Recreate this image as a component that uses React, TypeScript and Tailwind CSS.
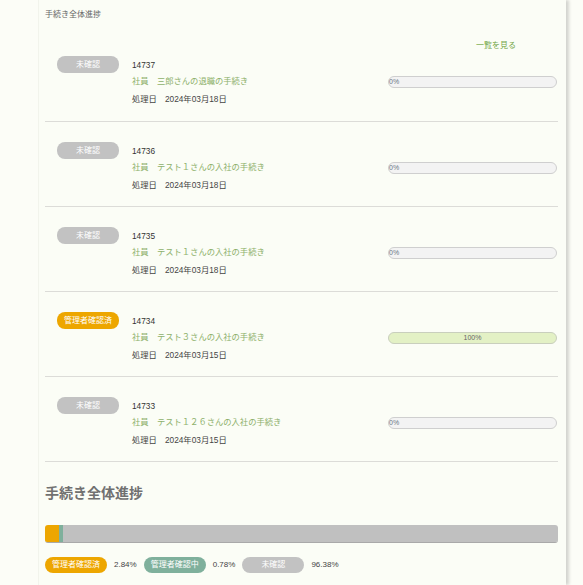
import React from "react";

type Row = {
  status: "unconfirmed" | "done";
  id: string;
  title: string;
  date: string;
  pct: number;
};

const rows: Row[] = [
  { status: "unconfirmed", id: "14737", title: "社員　三郎さんの退職の手続き", date: "2024年03月18日", pct: 0 },
  { status: "unconfirmed", id: "14736", title: "社員　テスト１さんの入社の手続き", date: "2024年03月18日", pct: 0 },
  { status: "unconfirmed", id: "14735", title: "社員　テスト１さんの入社の手続き", date: "2024年03月18日", pct: 0 },
  { status: "done", id: "14734", title: "社員　テスト３さんの入社の手続き", date: "2024年03月15日", pct: 100 },
  { status: "unconfirmed", id: "14733", title: "社員　テスト１２６さんの入社の手続き", date: "2024年03月15日", pct: 0 },
];

function Badge({ status }: { status: Row["status"] }) {
  if (status === "done") {
    return (
      <div className="w-[62px] h-[17px] rounded-[8px] bg-[#eda600] text-white text-[8px] leading-[17px] text-center shrink-0">
        管理者確認済
      </div>
    );
  }
  return (
    <div className="w-[62px] h-[17px] rounded-[8px] bg-[#c2c2c2] text-white text-[8px] leading-[17px] text-center shrink-0">
      未確認
    </div>
  );
}

function Progress({ pct }: { pct: number }) {
  if (pct >= 100) {
    return (
      <div className="w-[169px] h-[12px] rounded-full border border-[#c9cfbd] bg-[#e3f1c5] text-[7px] leading-[10px] text-center text-[#666]">
        100%
      </div>
    );
  }
  return (
    <div className="w-[169px] h-[12px] rounded-full border border-[#cfcfcf] bg-[#f3f3f3] text-[7px] leading-[10px] text-[#6b7785]">
      0%
    </div>
  );
}

function RowItem({ row, first }: { row: Row; first: boolean }) {
  return (
    <div className={`flex border-b border-[#dcdcd8] pl-[12px] ${first ? "pt-[4px] pb-[13px]" : "pt-[20px] pb-[12px]"}`}>
      <div>
        <Badge status={row.status} />
      </div>
      <div className="ml-[13px] flex-1 flex flex-col text-[8.3px]">
        <div className="h-[17px] leading-[18px] text-[#333]">{row.id}</div>
        <div className="h-[17px] flex items-center justify-between pr-[1px]">
          <span className="text-[#8db06a]">{row.title}</span>
          <Progress pct={row.pct} />
        </div>
        <div className="h-[18px] leading-[18px] text-[#444] flex">
          <span>処理日</span>
          <span className="ml-[8px]">{row.date}</span>
        </div>
      </div>
    </div>
  );
}

export default function App() {
  return (
    <div className="w-[583px] h-[585px] bg-[#fcfdf7] overflow-hidden font-['Liberation_Sans','Noto_Sans_CJK_JP',sans-serif]">
      <div className="ml-[38px] w-[528px] h-full bg-[#fbfdf6] border-l border-[#f2f4ec] shadow-[3px_0_3px_rgba(0,0,0,0.16)] pl-[6px] pr-[8px]">
        <div className="pt-[9px] h-[21px] text-[8px] leading-[12px] text-[#666]">手続き全体進捗</div>
        <div className="mt-[19px] h-[12px] text-[8px] leading-[12px] text-[#72a646] flex justify-end pr-[42px]">
          一覧を見る
        </div>
        {rows.map((r, i) => (
          <RowItem key={r.id} row={r} first={i === 0} />
        ))}
        <div className="mt-[21px] h-[20px] text-[14px] leading-[20px] font-semibold text-[#707070]">手続き全体進捗</div>
        <div className="mt-[22px] h-[18px] flex rounded-[3px] overflow-hidden border-b border-[#a9a9a9]">
          <div className="w-[14px] bg-[#eda600]" />
          <div className="w-[4px] bg-[#7fb09c]" />
          <div className="flex-1 bg-[#c0c0c0]" />
        </div>
        <div className="mt-[14px] flex items-center gap-[7px] text-[8px]">
          <div className="w-[62px] h-[16px] rounded-[8px] bg-[#eda600] text-white leading-[16px] text-center">管理者確認済</div>
          <span className="text-[#444]">2.84%</span>
          <div className="w-[62px] h-[16px] rounded-[8px] bg-[#7fb09c] text-white leading-[16px] text-center">管理者確認中</div>
          <span className="text-[#444]">0.78%</span>
          <div className="w-[62px] h-[16px] rounded-[8px] bg-[#c2c2c2] text-white leading-[16px] text-center">未確認</div>
          <span className="text-[#444]">96.38%</span>
        </div>
      </div>
    </div>
  );
}
